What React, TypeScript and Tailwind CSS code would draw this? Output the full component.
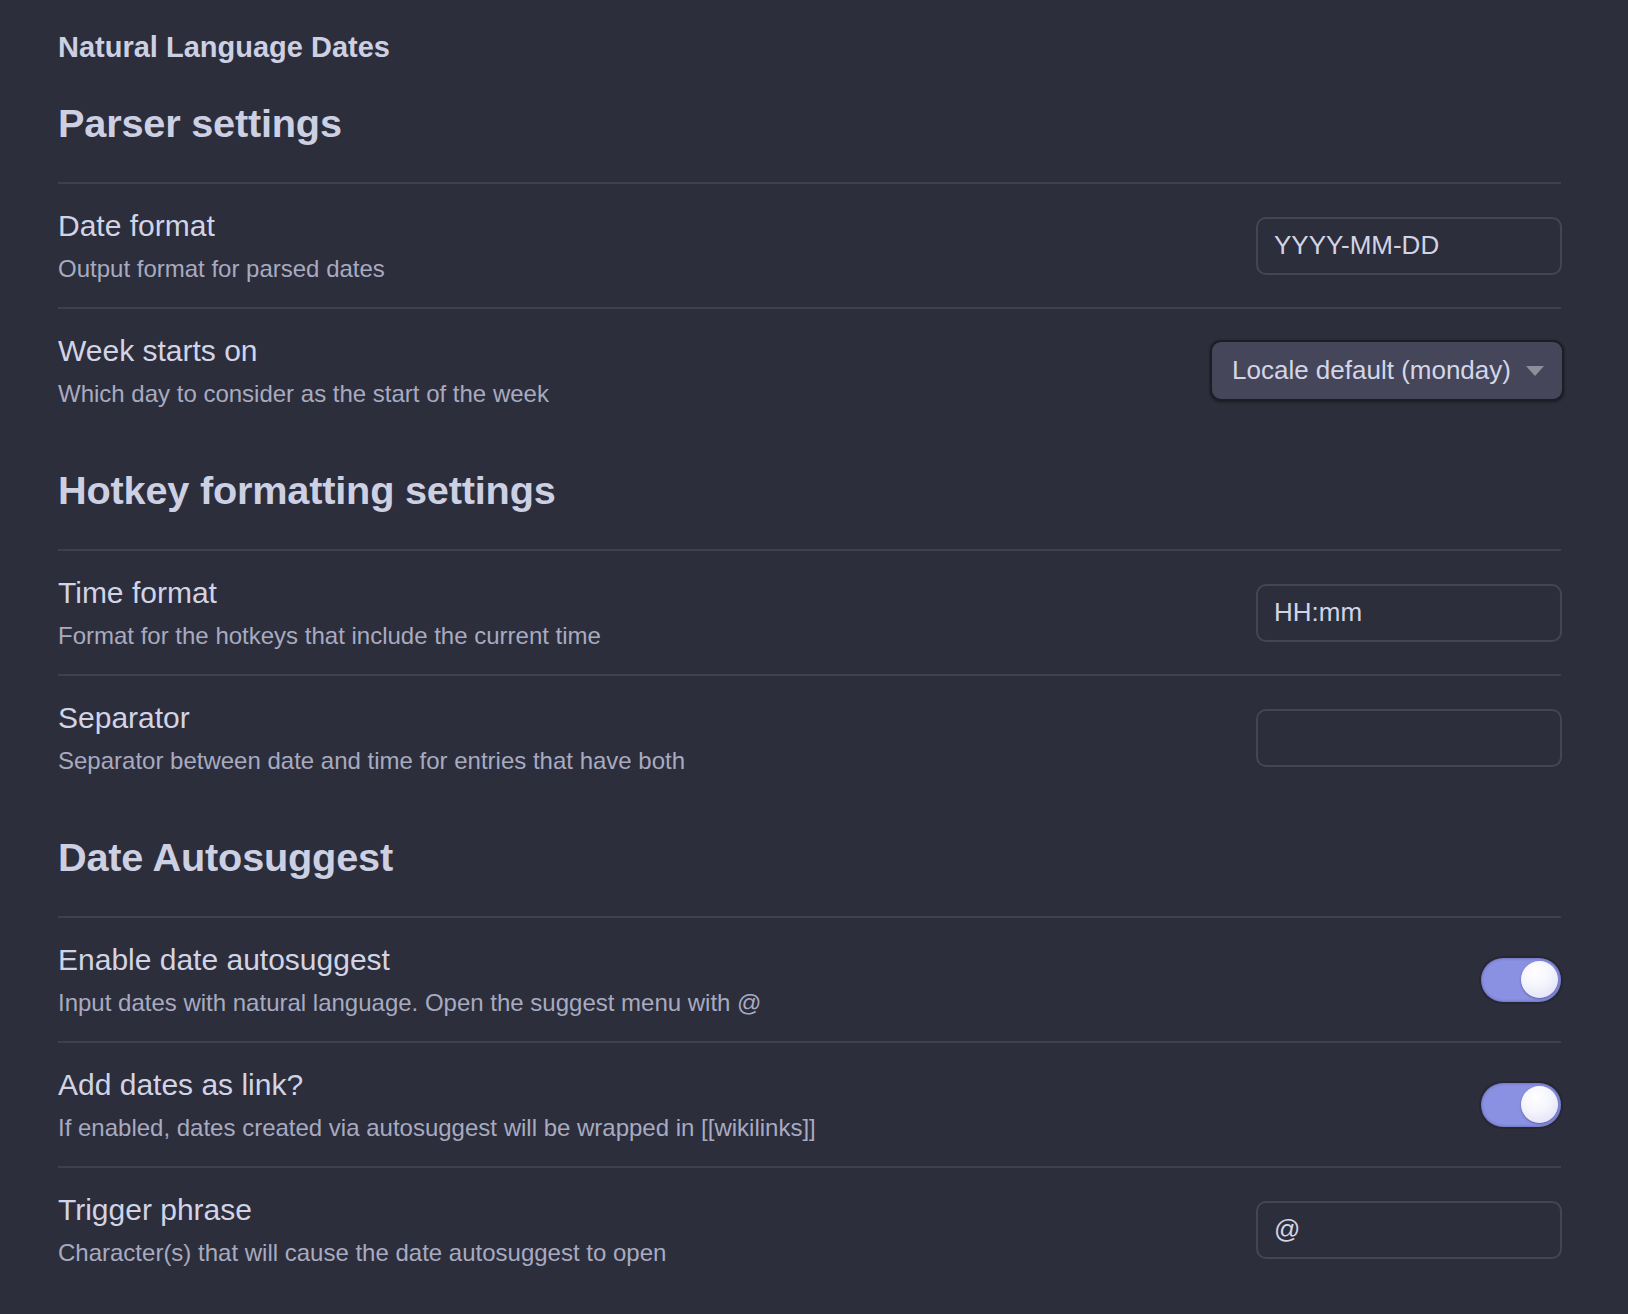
import React from "react";

const font = { fontFamily: '"Liberation Sans", Arial, sans-serif' };

function SectionHeading({ title }: { title: string }) {
  return (
    <div className="h-[117px] flex items-center text-[39.7px] font-bold text-[#cdd0e3] tracking-[-0.2px]">
      {title}
    </div>
  );
}

function SettingRow({
  name,
  desc,
  children,
}: {
  name: string;
  desc: string;
  children: React.ReactNode;
}) {
  return (
    <div className="h-[125px] flex items-center justify-between border-t-2 border-[#3e404d]">
      <div className="flex flex-col pr-4 mt-[2px]">
        <div className="text-[30px] leading-[35px] text-[#d2d4e6]">{name}</div>
        <div className="text-[24px] leading-[32px] mt-[10px] text-[#a8aac0]">{desc}</div>
      </div>
      <div className="shrink-0 flex items-center">{children}</div>
    </div>
  );
}

function TextInput({ value }: { value: string }) {
  return (
    <input
      type="text"
      defaultValue={value}
      spellCheck={false}
      className="w-[306px] h-[58px] -mr-[1px] rounded-[10px] border-2 border-[#444656] bg-[#2c2e3b] px-[16px] text-[26px] text-[#d2d4e6] outline-none"
      style={font}
    />
  );
}

function Dropdown({ label }: { label: string }) {
  return (
    <div className="w-[354px] h-[61px] -mr-[3px] rounded-[11px] bg-[#45465a] border-2 border-[#1d1e25] shadow-[0_1px_3px_rgba(0,0,0,0.45)] pl-[20px] pr-[18px] flex items-center justify-between">
      <span className="text-[26px] text-[#d4d6e8]">{label}</span>
      <svg width="18" height="10" viewBox="0 0 18 10">
        <path d="M0 0 H18 L9 10 Z" fill="#8d8e99" />
      </svg>
    </div>
  );
}

function Toggle() {
  return (
    <div className="w-[80px] h-[44px] rounded-full bg-[#8a90e2] px-[3px] flex items-center justify-end shadow-[0_0_0_2px_#262733,inset_0_0_3px_rgba(40,40,90,0.5)]">
      <div className="w-[37px] h-[37px] rounded-full bg-[radial-gradient(circle_at_40%_30%,#ffffff_0%,#f4f4fd_45%,#d9daf3_100%)] shadow-[0_1px_2px_rgba(20,20,60,0.4)]" />
    </div>
  );
}

export default function App() {
  return (
    <div className="min-h-screen bg-[#2c2e3b] pl-[58px] pr-[67px] pt-[30px]" style={font}>
      <div className="text-[29px] leading-[34px] mb-[1px] font-bold text-[#cdd0e3]">Natural Language Dates</div>

      <SectionHeading title="Parser settings" />
      <SettingRow name="Date format" desc="Output format for parsed dates">
        <TextInput value="YYYY-MM-DD" />
      </SettingRow>
      <SettingRow name="Week starts on" desc="Which day to consider as the start of the week">
        <Dropdown label="Locale default (monday)" />
      </SettingRow>

      <SectionHeading title="Hotkey formatting settings" />
      <SettingRow name="Time format" desc="Format for the hotkeys that include the current time">
        <TextInput value="HH:mm" />
      </SettingRow>
      <SettingRow name="Separator" desc="Separator between date and time for entries that have both">
        <TextInput value="" />
      </SettingRow>

      <SectionHeading title="Date Autosuggest" />
      <SettingRow name="Enable date autosuggest" desc="Input dates with natural language. Open the suggest menu with @">
        <Toggle />
      </SettingRow>
      <SettingRow name="Add dates as link?" desc="If enabled, dates created via autosuggest will be wrapped in [[wikilinks]]">
        <Toggle />
      </SettingRow>
      <SettingRow name="Trigger phrase" desc="Character(s) that will cause the date autosuggest to open">
        <TextInput value="@" />
      </SettingRow>
    </div>
  );
}
